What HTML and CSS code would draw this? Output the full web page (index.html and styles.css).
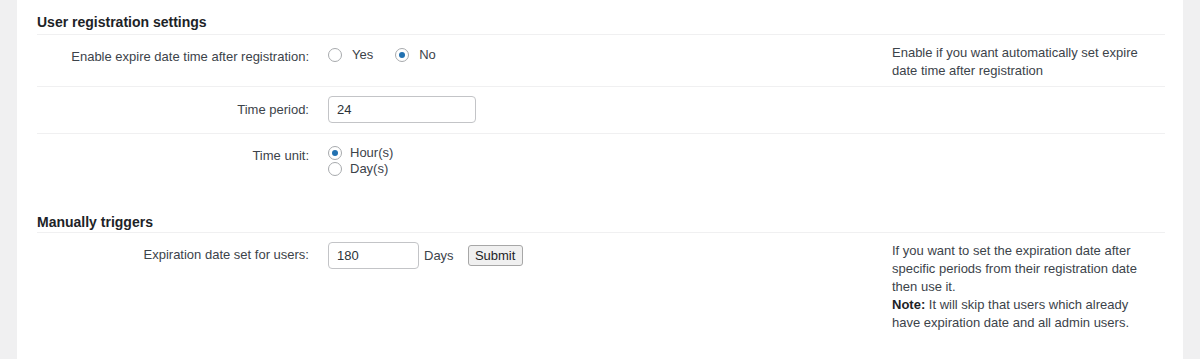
FILE: index.html
```html
<!DOCTYPE html>
<html lang="en">
<head>
    <meta charset="UTF-8">
    <meta name="viewport" content="width=device-width, initial-scale=1.0">
    <title>User Expiry Settings</title>
    <link rel="stylesheet" href="styles.css">
</head>
<body>

    <div class="panel">
        <h2 class="section-title">User registration settings</h2>

        <div class="row">
            <div class="row-label">Enable expire date time after registration:</div>
            <div class="row-field radio-inline">
                <label class="radio"><input type="radio" name="enableExpire" value="yes">Yes</label>
                <label class="radio"><input type="radio" name="enableExpire" value="no" checked>No</label>
            </div>
            <div class="row-help">Enable if you want automatically set expire date time after registration</div>
        </div>

        <div class="row row-input">
            <div class="row-label label-input">Time period:</div>
            <div class="row-field">
                <input type="text" class="text-input period-input" value="24">
            </div>
            <div class="row-help"></div>
        </div>

        <div class="row row-last">
            <div class="row-label">Time unit:</div>
            <div class="row-field radio-stack">
                <label class="radio"><input type="radio" name="timeUnit" value="hours" checked>Hour(s)</label>
                <label class="radio"><input type="radio" name="timeUnit" value="days">Day(s)</label>
            </div>
            <div class="row-help"></div>
        </div>

        <h2 class="section-title section-next">Manually triggers</h2>

        <div class="row row-last">
            <div class="row-label">Expiration date set for users:</div>
            <div class="row-field field-inline">
                <input type="text" class="text-input days-input" value="180">
                <span class="unit">Days</span>
                <button type="button" class="btn-submit">Submit</button>
            </div>
            <div class="row-help">
                <p>If you want to set the expiration date after specific periods from their registration date then use it.</p>
                <p><strong>Note:</strong> It will skip that users which already have expiration date and all admin users.</p>
            </div>
        </div>
    </div>

</body>
</html>
```

FILE: styles.css
```css
body {
    margin: 0;
    background-color: #f0f0f1;
    font-family: 'Liberation Sans', Arial, sans-serif;
    font-size: 13px;
    color: #3c434a;
}

.panel {
    background-color: #fff;
    margin: 0 17px;
    min-height: 100vh;
    padding: 12px 18px 0 20px;
    box-sizing: border-box;
}

.section-title {
    margin: 0;
    font-size: 14px;
    font-weight: bold;
    line-height: 20px;
    color: #1d2327;
    padding-bottom: 2px;
    border-bottom: 1px solid #f0f0f1;
}

.section-next {
    margin-top: 26px;
    padding-bottom: 0;
}

.row {
    display: grid;
    grid-template-columns: 272px 1fr 253px;
    column-gap: 19px;
    padding: 9px 20px 6px 0;
    border-bottom: 1px solid #f0f0f1;
    line-height: 18px;
}

.row-input {
    padding-bottom: 10px;
}

.row-last {
    border-bottom: none;
    padding-bottom: 7px;
}

.row-label {
    text-align: right;
    padding-top: 4px;
}

.label-input {
    padding-top: 5px;
}

.radio {
    display: flex;
    align-items: center;
}

.radio input {
    appearance: none;
    -webkit-appearance: none;
    flex-shrink: 0;
    width: 14px;
    height: 14px;
    margin: 0 10px 0 0;
    border: 1px solid #a7aaad;
    border-radius: 50%;
    background: #fff;
    box-sizing: border-box;
    display: flex;
    align-items: center;
    justify-content: center;
}

.radio input:checked::before {
    content: "";
    width: 6px;
    height: 6px;
    border-radius: 50%;
    background-color: #2271b1;
}

.radio-inline {
    display: flex;
    align-items: flex-start;
    padding-top: 2px;
    align-self: start;
}

.radio-inline .radio {
    margin-right: 22px;
}

.radio-stack {
    padding-top: 2px;
    padding-bottom: 2px;
}

.radio-stack .radio {
    line-height: 16px;
}

.radio-stack .radio input {
    margin-right: 8px;
}

.text-input {
    font-family: inherit;
    font-size: 13px;
    color: #2c3338;
    height: 27px;
    padding: 0 8px;
    border: 1px solid #c3c4c7;
    border-radius: 4px;
    box-sizing: border-box;
    margin: 0;
    display: block;
}

.period-input {
    width: 148px;
}

.field-inline {
    display: flex;
    align-items: center;
    align-self: start;
}

.days-input {
    width: 91px;
}

.unit {
    margin-left: 5px;
}

.btn-submit {
    margin-left: 14px;
    height: 21px;
    width: 55px;
    padding: 0;
    font-family: inherit;
    font-size: 13px;
    color: #1d2327;
    background-color: #f0f0f0;
    border: 1px solid #a7a7a7;
    border-radius: 3px;
}

.row-help p {
    margin: 0;
}

.row-help strong {
    color: #1d2327;
}
```
